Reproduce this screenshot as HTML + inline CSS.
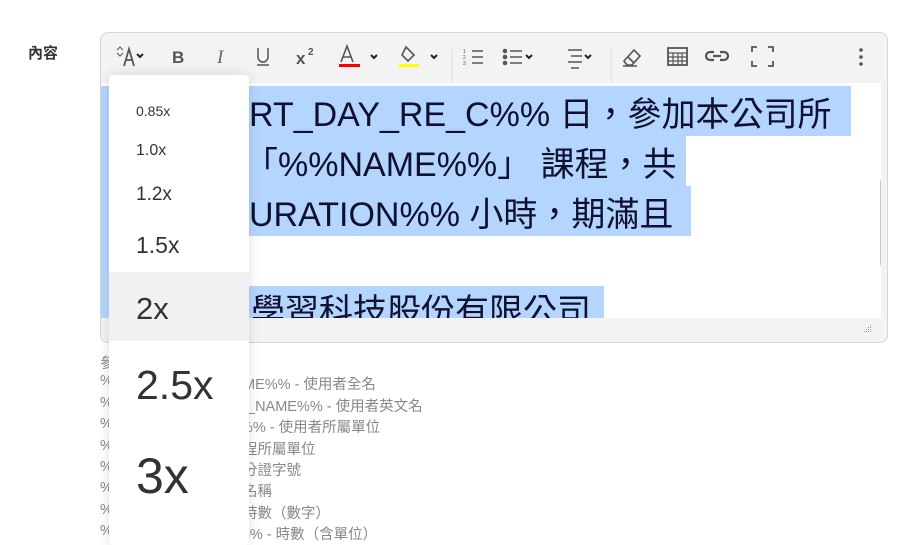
<!DOCTYPE html>
<html><head><meta charset="utf-8"><style>
*{margin:0;padding:0;box-sizing:border-box}
body{width:912px;height:535px;overflow:hidden;background:#fff;font-family:"Liberation Sans","Noto Sans CJK TC",sans-serif;position:relative}
.a{position:absolute}
.lbl{left:28px;top:42px;font-size:15px;font-weight:bold;color:#333}
.ed{left:100px;top:32px;width:788px;height:311px;border:1px solid #d6d6d6;border-radius:8px;background:#f3f3f3;overflow:hidden}
.tb{left:0;top:0;width:786px;height:50px}
.ct{left:0;top:50px;width:780px;height:235px;background:#fff;overflow:hidden}
.hl{position:absolute;background:#b4d5fe}
.ln{position:absolute;font-size:34px;color:#101030;white-space:nowrap}
.sb{left:779px;top:96px;width:6px;height:88px;background:#c8c8c8;border-radius:3px}
.help{font-size:14.5px;color:#888;white-space:nowrap}
.dd{left:109px;top:75px;width:140px;height:470px;background:#fff;box-shadow:0 0 12px rgba(0,0,0,.12);border-radius:4px}
.it{position:absolute;left:27px;color:#333;font-family:"Liberation Sans",sans-serif}
svg{position:absolute}
</style></head><body>
<div class="a lbl">內容</div>
<div class="a ed">
 <div class="a tb">
  <svg width="786" height="50" viewBox="0 0 786 50" fill="none" stroke="#555" stroke-width="2">
   <path d="M16 17l3-3 3 3M16 20l3 3 3-3" stroke-width="1"/>
   <path d="M23 33l5-17 5 17M25 27h6" stroke-width="1.8"/>
   <path d="M36 21l3 3 3-3" stroke="#222"/>
   <text x="71" y="30" font-size="17" font-weight="bold" fill="#555" stroke="none" font-family="Liberation Sans">B</text>
   <text x="116" y="30" font-size="19" font-style="italic" fill="#666" stroke="none" font-family="Liberation Serif">I</text>
   <path d="M157 15v9a5 5 0 0010 0v-9M156 32h12" stroke-width="1.5"/>
   <text x="195" y="31" font-size="17" font-weight="bold" fill="#555" stroke="none">x</text>
   <text x="207" y="22" font-size="10" font-weight="bold" fill="#555" stroke="none">2</text>
   <path d="M240 29l6-16 6 16M242 24h8" stroke-width="1.6"/>
   <rect x="238" y="31" width="21" height="3" fill="#f00" stroke="none"/>
   <path d="M270 22l3 3 3-3" stroke="#222"/>
   <path d="M305 14l8 8-6 6-6-6zM303 18l2-4" stroke-width="1.6"/>
   <rect x="298" y="31" width="20" height="3" fill="#ff0" stroke="none"/>
   <path d="M330 22l3 3 3-3" stroke="#222"/>
   <path d="M351 16v34" stroke="#ddd" stroke-width="1"/>
   <path d="M371 18h11M371 24h11M371 30h11" stroke-width="1.6"/>
   <text x="362" y="20" font-size="5" fill="#555" stroke="none">1</text><text x="362" y="26" font-size="5" fill="#555" stroke="none">2</text><text x="362" y="32" font-size="5" fill="#555" stroke="none">3</text>
   <path d="M409 18h12M409 24h12M409 30h12" stroke-width="1.6"/>
   <circle cx="404" cy="18" r="1.3" fill="#555"/><circle cx="404" cy="24" r="1.3" fill="#555"/><circle cx="404" cy="30" r="1.3" fill="#555"/>
   <path d="M425 22l3 3 3-3" stroke="#222"/>
   <path d="M467 17h14M470 23h11M467 29h14M470 35h8" stroke-width="1.4"/>
   <path d="M484 22l3 3 3-3" stroke="#222"/>
   <path d="M510 16v34" stroke="#ddd" stroke-width="1"/>
   <path d="M523 28l10-11 6 6-8 9h-5zM527 24l6 6M522 33h14" stroke-width="1.6"/>
   <rect x="567" y="15" width="19" height="17" stroke-width="1.8"/>
   <path d="M567 20h19M567 24h19M567 28h19M572 20v12M577 20v12M581 20v12" stroke-width="1.2"/>
   <path d="M613 19h-4a4 4 0 000 8h4M619 19h4a4 4 0 010 8h-4M612 23h8" stroke-width="2.2"/>
   <path d="M651 19v-5h5M667 14h5v5M672 28v5h-5M656 33h-5v-5" stroke-width="1.8"/>
   <circle cx="760" cy="17" r="1.8" fill="#555" stroke="none"/><circle cx="760" cy="24" r="1.8" fill="#555" stroke="none"/><circle cx="760" cy="31" r="1.8" fill="#555" stroke="none"/>
  </svg>
 </div>
 <div class="a ct">
  <div class="hl" style="left:0;top:3px;width:750px;height:50px"></div>
  <div class="hl" style="left:0;top:53px;width:585px;height:50px"></div>
  <div class="hl" style="left:0;top:103px;width:590px;height:50px"></div>
  <div class="hl" style="left:0;top:153px;width:148px;height:50px"></div>
  <div class="hl" style="left:0;top:203px;width:503px;height:40px"></div>
  <div class="ln" style="top:4px;left:148px">RT_DAY_RE_C%% 日，參加本公司所</div>
  <div class="ln" style="top:54px;left:143px">「%%NAME%%」 課程，共</div>
  <div class="ln" style="top:104px;left:148px">URATION%% 小時，期滿且</div>
  <div class="ln" style="top:201px;left:150px">學習科技股份有限公司</div>
  <div class="a sb"></div>
 </div>
 <svg style="left:760px;top:292px" width="12" height="10"><g fill="#999"><rect x="9" y="0" width="1" height="1"/><rect x="7" y="2" width="1" height="1"/><rect x="9" y="2" width="1" height="1"/><rect x="5" y="4" width="1" height="1"/><rect x="7" y="4" width="1" height="1"/><rect x="9" y="4" width="1" height="1"/><rect x="3" y="6" width="1" height="1"/><rect x="5" y="6" width="1" height="1"/><rect x="7" y="6" width="1" height="1"/><rect x="9" y="6" width="1" height="1"/></g></svg>
</div>
<div class="a help" style="left:100px;top:352px">參</div>
<div class="a help" style="left:100px;top:373px">%</div>
<div class="a help" style="left:100px;top:395px">%</div>
<div class="a help" style="left:100px;top:416px">%</div>
<div class="a help" style="left:100px;top:438px">%</div>
<div class="a help" style="left:100px;top:459px">%</div>
<div class="a help" style="left:100px;top:480px">%</div>
<div class="a help" style="left:100px;top:502px">%</div>
<div class="a help" style="left:100px;top:523px">%</div>
<div class="a help" style="left:243px;top:373px">ME%% - 使用者全名</div>
<div class="a help" style="left:247px;top:395px">_NAME%% - 使用者英文名</div>
<div class="a help" style="left:240px;top:416px">%% - 使用者所屬單位</div>
<div class="a help" style="left:243px;top:438px">程所屬單位</div>
<div class="a help" style="left:243px;top:459px">分證字號</div>
<div class="a help" style="left:243px;top:480px">名稱</div>
<div class="a help" style="left:243px;top:502px">時數（數字）</div>
<div class="a help" style="left:237px;top:523px">%% - 時數（含單位）</div>
<div class="a dd">
 <div class="it" style="top:28px;font-size:14px">0.85x</div>
 <div class="it" style="top:67px;font-size:16px">1.0x</div>
 <div class="it" style="top:109px;font-size:19px">1.2x</div>
 <div style="position:absolute;left:0;top:197px;width:140px;height:69px;background:#f1f1f1"></div>
 <div class="it" style="top:157px;font-size:23px">1.5x</div>
 <div class="it" style="top:216px;font-size:31px">2x</div>
 <div class="it" style="top:287px;font-size:41px">2.5x</div>
 <div class="it" style="top:372px;font-size:50px">3x</div>
</div>
</body></html>
